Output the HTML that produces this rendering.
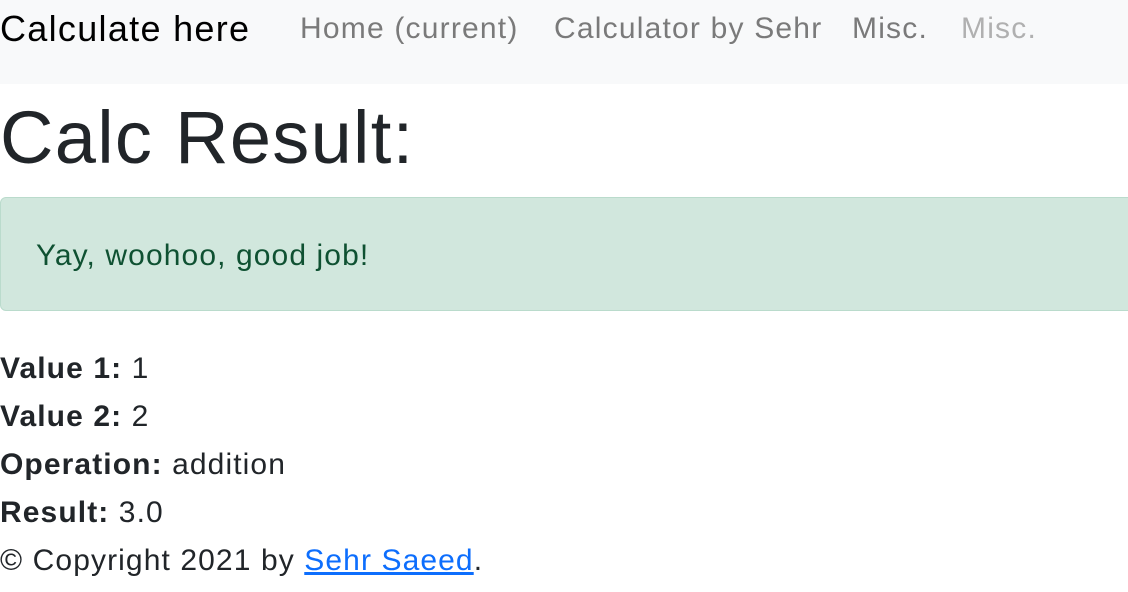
<!DOCTYPE html>
<html><head><meta charset="utf-8"><style>
body{margin:0;width:1128px;height:592px;overflow:hidden;font-family:"Liberation Sans",Arial,sans-serif;color:#212529;background:#fff}
.nav{height:84px;background:#f8f9fa;position:relative}
.nav span{position:absolute;top:0;line-height:58px;white-space:nowrap}
.brand{left:0;font-size:36px;color:#000;letter-spacing:1.3px}
.l{font-size:30px;color:#7a7a7a;letter-spacing:1.2px}
h1{position:absolute;top:88px;left:0;margin:0;font-size:74px;font-weight:500;line-height:100px;letter-spacing:1.3px}
.alert{position:absolute;top:197px;left:0;width:1140px;height:114px;background:#d1e7dd;border:1px solid #badbcc;border-radius:6px;color:#0f5132;font-size:30px;box-sizing:border-box;padding-left:35px;line-height:116px;letter-spacing:1.1px}
.lines{position:absolute;top:345px;left:0;font-size:30px;line-height:48px;letter-spacing:1.1px}
a{color:#0d6efd}
</style></head><body>
<div class="nav">
<span class="brand">Calculate here</span>
<span class="l" style="left:300px">Home (current)</span>
<span class="l" style="left:554px">Calculator by Sehr</span>
<span class="l" style="left:852px">Misc.</span>
<span class="l" style="left:961px;color:#b0b0b0">Misc.</span>
</div>
<h1>Calc Result:</h1>
<div class="alert">Yay, woohoo, good job!</div>
<div class="lines">
<div><b>Value 1:</b> 1</div>
<div><b>Value 2:</b> 2</div>
<div><b>Operation:</b> addition</div>
<div><b>Result:</b> 3.0</div>
<div>© Copyright 2021 by <a href="#">Sehr Saeed</a>.</div>
</div>
</body></html>
